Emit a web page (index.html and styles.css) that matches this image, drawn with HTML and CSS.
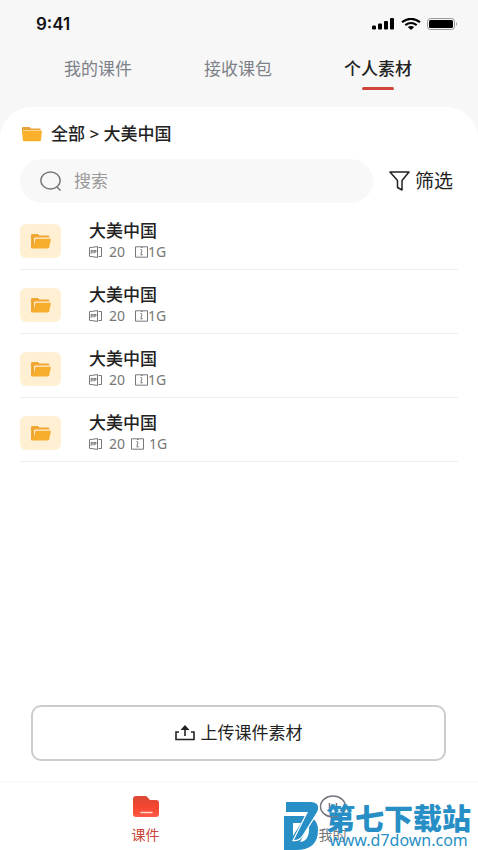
FILE: index.html
```html
<!DOCTYPE html>
<html lang="zh-CN">
<head>
<meta charset="utf-8">
<meta name="viewport" content="width=device-width, initial-scale=1">
<title>个人素材</title>
<link rel="stylesheet" href="styles.css">
</head>
<body>
<svg class="defs" aria-hidden="true">
  <defs>
    <symbol id="folder-open" viewBox="0 0 20 15">
      <path d="M0 1.2Q0 0 1.2 0H6.8L8.6 1.6H17Q18.2 1.6 18.2 2.8V3.6H5Q3.2 3.6 2.8 5L1 12.6H0Z" fill="#f0a632"/>
      <path d="M0 2H3V12L0 14Z" fill="#f0a632"/>
      <path d="M4.500 4.8H19.2Q20 4.8 19.8 5.7L18.2 13.2Q17.9 14.6 16.5 14.6H1Q0 14.600 0 13.600L2.800 12Z" fill="#f6ad2c"/>
    </symbol>
    <symbol id="pages" viewBox="0 0 13 12">
      <path d="M.5 1.7L8.5.6V11.4L.5 10.3ZM9.5 1.5H12.5V10.5H9.5M2.2 7.8V4.4H4.2V6.2H2.2M5.2 7.5V4.4H7V6H5.2" fill="none" stroke="#777" stroke-width="1"/>
    </symbol>
    <symbol id="archive" viewBox="0 0 13 12">
      <path d="M.5.8H12.5V11.2H.5ZM6 1.5H7.5M5.5 3.5H7M6 5.2H7.5M5.5 7H7M5.3 8.8H7.7" fill="none" stroke="#777" stroke-width="1"/>
      <path d="M6.5 3V9" stroke="#999" stroke-width="1"/>
    </symbol>
  </defs>
</svg>

<header class="top">
  <div class="status">
    <span class="time">9:41</span>
    <span class="signals">
      <svg width="23" height="12" viewBox="0 0 23 12" aria-hidden="true"><rect y="7.5" width="4" height="4" rx="1.3"/><rect x="6" y="5.5" width="4" height="6" rx="1"/><rect x="12" y="3" width="4" height="8.500" rx="1"/><rect x="18" y="0" width="4" height="11.500" rx="1"/></svg>
      <svg width="20" height="12" viewBox="0 0 20 12" aria-hidden="true"><path d="M1 4.200Q10-2.600 19 4.200M4.300 7.200Q10 2.800 15.700 7.200" fill="none" stroke="#000" stroke-width="2.100"/><path d="M6.800 9Q10 6.800 13.200 9L10 12Z"/></svg>
      <svg width="31" height="12" viewBox="0 0 31 12" aria-hidden="true"><rect x=".5" y=".5" width="27" height="11" rx="3" fill="none" stroke="#999"/><rect x="2" y="2" width="24" height="8" rx="1.500"/><path d="M29 4Q31 6 29 8Z" fill="#999"/></svg>
    </span>
  </div>
  <nav class="tabs">
    <a href="#mine">我的课件</a>
    <a href="#received">接收课包</a>
    <a href="#personal" class="active" aria-current="page">个人素材</a>
  </nav>
</header>

<main class="sheet">
  <div class="crumbs">
    <svg width="20" height="16" viewBox="0 0 20 16" aria-hidden="true"><path d="M0 2Q0 1 1 1H7.500L9 2.500H18.500V7H0Z" fill="#e9a13b"/><path d="M0 5H20L19 14Q18.900 15.200 17.700 15.200H2Q.9 15.200.8 14Z" fill="#fbb02b"/><path d="M1 4.500H18" stroke="#ffd98f"/></svg>
    <span>全部 &gt; 大美中国</span>
  </div>

  <div class="tools">
    <label class="search">
      <svg width="22" height="20" viewBox="0 0 22 20" fill="none" stroke="#777" stroke-width="1.500" aria-hidden="true"><ellipse cx="10.500" cy="9.500" rx="9.700" ry="8.500"/><path d="M16.500 15.500L20.500 19.500"/></svg>
      <input type="search" placeholder="搜索" aria-label="搜索">
    </label>
    <button class="filter" type="button">
      <svg width="21" height="20" viewBox="0 0 21 20" fill="none" stroke="#222" stroke-width="1.500" stroke-linejoin="round" aria-hidden="true"><path d="M1 1H20L13 9.500V19L8.500 16.500V9.500Z"/></svg>
      <span>筛选</span>
    </button>
  </div>

  <ul class="list">
    <li>
      <span class="thumb"><svg width="20" height="15"><use href="#folder-open"/></svg></span>
      <div class="info"><h2>大美中国</h2><p><svg width="13" height="12"><use href="#pages"/></svg><span class="count">20</span><svg width="13" height="12"><use href="#archive"/></svg><span>1G</span></p></div>
    </li>
    <li>
      <span class="thumb"><svg width="20" height="15"><use href="#folder-open"/></svg></span>
      <div class="info"><h2>大美中国</h2><p><svg width="13" height="12"><use href="#pages"/></svg><span class="count">20</span><svg width="13" height="12"><use href="#archive"/></svg><span>1G</span></p></div>
    </li>
    <li>
      <span class="thumb"><svg width="20" height="15"><use href="#folder-open"/></svg></span>
      <div class="info"><h2>大美中国</h2><p><svg width="13" height="12"><use href="#pages"/></svg><span class="count">20</span><svg width="13" height="12"><use href="#archive"/></svg><span>1G</span></p></div>
    </li>
    <li>
      <span class="thumb"><svg width="20" height="15"><use href="#folder-open"/></svg></span>
      <div class="info compact"><h2>大美中国</h2><p><svg width="13" height="12"><use href="#pages"/></svg><span class="count">20</span><svg width="13" height="12"><use href="#archive"/></svg><span>1G</span></p></div>
    </li>
  </ul>

  <button class="upload" type="button">
    <svg width="20" height="16" viewBox="0 0 20 16" fill="none" stroke="#222" stroke-width="1.600" aria-hidden="true"><path d="M4 7H1V14.500H19V7H16M10 11V3"/><path d="M5.500 5L10 0L14.500 5Z" fill="#222" stroke="none"/></svg>
    <span>上传课件素材</span>
  </button>
</main>

<footer class="bottom">
  <nav class="tabbar">
    <a href="#courseware" class="current" aria-current="page">
      <svg width="28" height="24" viewBox="0 0 28 24" aria-hidden="true"><defs><linearGradient id="red" x2="0" y2="1"><stop stop-color="#d94a35"/><stop offset=".5" stop-color="#f4452f"/><stop offset="1" stop-color="#ff5945"/></linearGradient></defs><path d="M1 4Q1 1 4 1H13Q14.500 1 15.500 2.200L18 5H24Q27 5 27 8V19Q27 22 24 22H4Q1 22 1 19Z" fill="url(#red)"/><path d="M9 17.500H20" stroke="#ffd7ce" stroke-width="1.600" stroke-linecap="round"/></svg>
      <span>课件</span>
    </a>
    <a href="#me">
      <svg width="28" height="24" viewBox="0 0 28 24" fill="none" stroke="#73777d" stroke-width="1.500" aria-hidden="true"><ellipse cx="14" cy="11.500" rx="12.500" ry="10.500"/><path d="M10.500 8V13M17.500 8V13"/></svg>
      <span>我的</span>
    </a>
  </nav>
  <div class="watermark">
    <svg width="36" height="48" viewBox="0 0 36 48" aria-hidden="true">
      <path fill="#278fc5" fill-rule="evenodd" d="M0 14H20Q34 15 34 28Q34 48 12 48H0ZM9 21V34L17 21ZM16 40Q26 39 25 24Z"/>
      <path fill="#278fc5" stroke="#fff" stroke-width="2.500" paint-order="stroke" d="M2 0H27Q37 1 33 10L18 34Q15 38 10 38L24 10H2Z"/>
    </svg>
    <div class="brand"><strong>第七下载站</strong><span>www.d7down.com</span></div>
  </div>
</footer>
</body>
</html>
```

FILE: styles.css
```css
* { box-sizing: border-box; }

body {
  margin: 0;
  min-height: 100vh;
  display: flex;
  flex-direction: column;
  background: #f7f7f7;
  color: #222;
  font-family: "Noto Sans", "Noto Sans CJK SC", sans-serif;
  font-size: 17px;
  line-height: 24px;
}

a { color: inherit; text-decoration: none; }
button, input { font: inherit; color: inherit; border: 0; padding: 0; background: none; }
svg { flex: none; display: block; }
.defs { position: absolute; width: 0; height: 0; }

.status {
  height: 48px;
  padding: 0 20px 0 36px;
  display: flex;
  align-items: center;
  justify-content: space-between;
}
.time { font-family: Inter, sans-serif; font-size: 17px; font-weight: 600; color: #111; }
.signals { display: flex; gap: 6px; }

.tabs {
  height: 59px;
  padding: 9px 30px 0 28px;
  display: grid;
  grid-template-columns: repeat(3, 1fr);
  justify-items: center;
  color: #7c8087;
}
.tabs a { display: flex; flex-direction: column; align-items: center; gap: 6px; }
.tabs .active { color: #222; font-weight: 500; }
.active::after { content: ""; width: 32px; height: 3px; border-radius: 2px; background: #d0453a; }

.sheet {
  flex: 1;
  display: flex;
  flex-direction: column;
  padding: 15px 20px 20px;
  border-radius: 32px 32px 0 0;
  background: #fff;
}

.crumbs { display: flex; align-items: center; gap: 9px; padding-left: 2px; font-weight: 500; }

.tools { margin-top: 13px; display: flex; align-items: center; gap: 16px; padding-right: 5px; }
.search {
  flex: 1;
  min-width: 0;
  height: 44px;
  padding: 0 20px;
  display: flex;
  align-items: center;
  gap: 12px;
  border-radius: 22px;
  background: #f8f8f8;
}
.search input { flex: 1; min-width: 0; outline: 0; }
.search input::placeholder { color: #999; opacity: 1; }
.filter { display: flex; align-items: center; gap: 5px; font-size: 19px; }

.list { list-style: none; margin: 3px 0 0; padding: 0; }
.list li {
  height: 64px;
  padding-top: 7px;
  display: flex;
  align-items: center;
  gap: 28px;
  border-bottom: 1px solid #eee;
}
.thumb {
  width: 41px;
  height: 34px;
  display: flex;
  align-items: center;
  justify-content: center;
  border-radius: 6px;
  background: #fff0d4;
}
.info h2 { margin: 0; font-size: 17px; line-height: 22px; font-weight: 500; }
.info p { margin: 0; display: flex; align-items: center; font-size: 14px; line-height: 20px; color: #777; }
.count { margin: 0 10px 0 7px; }
.compact .count { margin-right: 6px; }
.compact .count + svg { margin-right: 5px; }

.upload {
  height: 56px;
  margin: auto 12px 0 11px;
  display: flex;
  align-items: center;
  justify-content: center;
  gap: 6px;
  border: 2px solid #ccc;
  border-radius: 10px;
}

.bottom { position: relative; background: #fff; border-top: 2px solid #fafafa; }
.tabbar {
  height: 67px;
  padding: 12px 52px 0;
  display: grid;
  grid-template-columns: 1fr 1fr;
  justify-items: center;
  font-size: 14px;
  line-height: 20px;
  color: #777;
}
.tabbar a { display: flex; flex-direction: column; align-items: center; gap: 6px; }
.current { color: #c9473a; }

.watermark {
  position: absolute;
  right: 7px;
  bottom: 0;
  display: flex;
  align-items: center;
  gap: 6px;
  color: #278fc5;
}
.brand { display: flex; flex-direction: column; align-items: center; }
.brand strong { font-family: "Noto Sans CJK SC", sans-serif; font-size: 29px; line-height: 29px; font-weight: 900; }
.brand span { font-size: 16px; line-height: 17px; }
```
